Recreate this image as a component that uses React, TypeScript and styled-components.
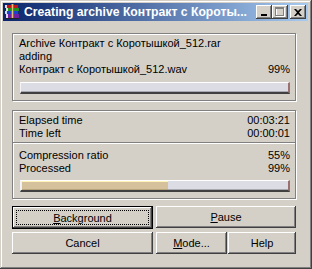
import React from "react";
import styled, { createGlobalStyle } from "styled-components";

const GlobalStyle = createGlobalStyle`
  html, body {
    margin: 0;
    padding: 0;
    background: #d4d0c8;
  }
  body {
    font-family: "Liberation Sans", Arial, sans-serif;
    font-size: 11px;
    color: #000;
  }
`;

const Window = styled.div`
  width: 312px;
  height: 269px;
  box-sizing: border-box;
  padding: 3px 4px 4px 3px;
  background: #d4d0c8;
  box-shadow: inset -1px -1px #404040, inset 1px 1px #d4d0c8,
    inset -2px -2px #808080, inset 2px 2px #fff;
  display: flex;
  flex-direction: column;
`;

const TitleBar = styled.div`
  height: 18px;
  display: flex;
  align-items: center;
  padding: 0 2px 0 1px;
  background: linear-gradient(to right, #0a246a, #a6caf0);
`;

const TitleText = styled.div`
  flex: 1;
  margin-left: 4px;
  color: #fff;
  font-weight: bold;
  font-size: 12.2px;
  white-space: nowrap;
  overflow: hidden;
`;

const CaptionButtons = styled.div`
  display: flex;
  align-items: center;
`;

const CaptionButton = styled.div<{ $gap?: number }>`
  width: 16px;
  height: 14px;
  box-sizing: border-box;
  margin-left: ${(p) => p.$gap ?? 0}px;
  background: #d4d0c8;
  box-shadow: inset -1px -1px #404040, inset 1px 1px #fff,
    inset -2px -2px #808080, inset 2px 2px #d4d0c8;
  display: flex;
  align-items: center;
  justify-content: center;
`;

const Content = styled.div`
  flex: 1;
  display: flex;
  flex-direction: column;
  padding: 12px 12px 0 9px;
`;

const Panel = styled.div<{ $mt?: number }>`
  margin-top: ${(p) => p.$mt ?? 0}px;
  border: 1px solid #808080;
  box-shadow: inset 1px 1px #fff, 1px 1px #fff;
  display: flex;
  flex-direction: column;
`;

const Section = styled.div<{ $pt: number; $pb: number }>`
  padding: ${(p) => p.$pt}px 5px ${(p) => p.$pb}px 6px;
`;

const Divider = styled.div`
  height: 1px;
  background: #808080;
  border-bottom: 1px solid #fff;
`;

const Row = styled.div`
  display: flex;
  justify-content: space-between;
  line-height: 13px;
  height: 13px;
  white-space: nowrap;
`;

const Bar = styled.div<{ $mt: number }>`
  margin: ${(p) => p.$mt}px 0 0 1px;
  height: 12px;
  box-sizing: border-box;
  display: flex;
  background: #dcdce4;
  border-top: 1px solid #fff;
  border-left: 1px solid #f4f4f8;
  border-bottom: 2px solid #404040;
  border-right: 2px solid #9a7070;
  box-shadow: inset 0 -1px #a8a8b0;
`;

const Fill = styled.div`
  height: 100%;
  background: #d5c29c;
  box-shadow: inset 0 1px #fff4b8, inset 1px 0 #fff4b8, inset 0 -1px #b8a47c;
`;

const Buttons = styled.div`
  display: flex;
  flex-direction: column;
  gap: 3px;
  margin-top: 7px;
`;

const ButtonRow = styled.div`
  display: flex;
`;

const Button = styled.div<{ $w: number; $ml?: number; $default?: boolean }>`
  width: ${(p) => p.$w}px;
  height: ${(p) => (p.$default ? 23 : 22)}px;
  margin-left: ${(p) => p.$ml ?? 0}px;
  box-sizing: border-box;
  background: #d4d0c8;
  border: ${(p) => (p.$default ? "1px solid #000" : "none")};
  box-shadow: inset -1px -1px #404040, inset 1px 1px #fff,
    inset -2px -2px #808080, inset 2px 2px #d4d0c8;
  display: flex;
  align-items: center;
  justify-content: center;
  position: relative;
  font-size: 11px;
  &::after {
    content: "";
    display: ${(p) => (p.$default ? "block" : "none")};
    position: absolute;
    inset: 3px;
    border: 1px dotted #000;
  }
`;

const U = styled.span`
  text-decoration: underline;
`;

const RarIcon = () => (
  <svg width="16" height="16" viewBox="0 0 16 16">
    <rect x="1" y="1" width="13" height="3" fill="#c01818" />
    <rect x="1" y="1" width="2" height="3" fill="#f0d0d0" />
    <rect x="2" y="4" width="13" height="3" fill="#209020" />
    <rect x="2" y="4" width="2" height="3" fill="#d0f0d0" />
    <rect x="1" y="7" width="13" height="3" fill="#2040d0" />
    <rect x="1" y="7" width="2" height="3" fill="#d0d8f8" />
    <rect x="2" y="10" width="13" height="4" fill="#7020a0" />
    <rect x="2" y="10" width="2" height="4" fill="#e8d0f0" />
    <rect x="7" y="0" width="3" height="15" fill="#8a6a30" />
    <rect x="8" y="0" width="1" height="15" fill="#e0c070" />
    <rect x="1" y="14" width="14" height="1" fill="#202020" />
  </svg>
);

export default function App() {
  return (
    <>
      <GlobalStyle />
      <Window>
        <TitleBar>
          <RarIcon />
          <TitleText>Creating archive Контракт с Короты...</TitleText>
          <CaptionButtons>
            <CaptionButton>
              <svg width="8" height="7" viewBox="0 0 8 7">
                <rect x="1" y="5" width="6" height="2" fill="#000" />
              </svg>
            </CaptionButton>
            <CaptionButton>
              <svg width="10" height="10" viewBox="0 0 10 10">
                <rect x="1.5" y="1.5" width="8" height="8" fill="none" stroke="#fff" />
                <rect x="0.5" y="0.5" width="8" height="8" fill="none" stroke="#808080" />
                <rect x="0" y="1" width="9" height="1" fill="#808080" />
              </svg>
            </CaptionButton>
            <CaptionButton $gap={2}>
              <svg width="8" height="7" viewBox="0 0 8 7">
                <path d="M0 0h2l2 2 2-2h2L5 3.5 8 7H6L4 5 2 7H0l3-3.5z" fill="#000" />
              </svg>
            </CaptionButton>
          </CaptionButtons>
        </TitleBar>
        <Content>
          <Panel>
            <Section $pt={3} $pb={6}>
              <Row>Archive Контракт с Коротышкой_512.rar</Row>
              <Row>adding</Row>
              <Row>
                <span>Контракт с Коротышкой_512.wav</span>
                <span>99%</span>
              </Row>
              <Bar $mt={6} />
            </Section>
          </Panel>
          <Panel $mt={9}>
            <Section $pt={3} $pb={2}>
              <Row>
                <span>Elapsed time</span>
                <span>00:03:21</span>
              </Row>
              <Row>
                <span>Time left</span>
                <span>00:00:01</span>
              </Row>
            </Section>
            <Divider />
            <Section $pt={5} $pb={6}>
              <Row>
                <span>Compression ratio</span>
                <span>55%</span>
              </Row>
              <Row>
                <span>Processed</span>
                <span>99%</span>
              </Row>
              <Bar $mt={5}>
                <Fill style={{ width: "55%" }} />
              </Bar>
            </Section>
          </Panel>
          <Buttons>
            <ButtonRow>
              <Button $w={141} $default>
                <span>
                  <U>B</U>ackground
                </span>
              </Button>
              <Button $w={140} $ml={3}>
                <span>
                  <U>P</U>ause
                </span>
              </Button>
            </ButtonRow>
            <ButtonRow>
              <Button $w={141}>Cancel</Button>
              <Button $w={71} $ml={3}>
                <span>
                  <U>M</U>ode...
                </span>
              </Button>
              <Button $w={68} $ml={1}>
                Help
              </Button>
            </ButtonRow>
          </Buttons>
        </Content>
      </Window>
    </>
  );
}
